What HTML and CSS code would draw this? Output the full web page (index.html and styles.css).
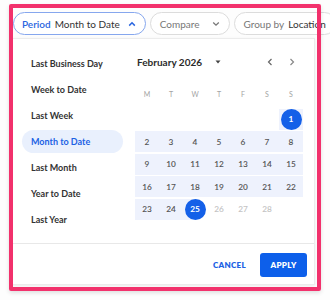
FILE: index.html
```html
<!DOCTYPE html>
<html lang="en">
<head>
    <meta charset="UTF-8">
    <meta name="viewport" content="width=device-width, initial-scale=1.0">
    <title>Period - Month to Date</title>
    <link rel="stylesheet" href="styles.css">
</head>
<body>
    <div class="page">
        <div class="filters">
            <div class="chip active">
                <span class="chip-label">Period</span>
                <span class="chip-value">Month to Date</span>
                <svg class="chevron" width="8" height="6" viewBox="0 0 8 6"><path d="M1.2 4.6 L4 1.8 L6.8 4.6" fill="none" stroke="#2a66e0" stroke-width="1.5"/></svg>
            </div>
            <div class="chip">
                <span class="chip-label grey">Compare</span>
                <svg class="chevron" width="8" height="6" viewBox="0 0 8 6"><path d="M1.2 1.6 L4 4.2 L6.8 1.6" fill="none" stroke="#777" stroke-width="1.3"/></svg>
            </div>
            <div class="chip">
                <span class="chip-label grey">Group by</span>
                <span class="chip-value">Location</span>
            </div>
        </div>

        <div class="popup">
            <div class="popup-body">
                <ul class="presets">
                    <li>Last Business Day</li>
                    <li>Week to Date</li>
                    <li>Last Week</li>
                    <li class="selected">Month to Date</li>
                    <li>Last Month</li>
                    <li>Year to Date</li>
                    <li>Last Year</li>
                </ul>

                <div class="calendar">
                    <div class="cal-head">
                        <span class="cal-title">February 2026</span>
                        <svg class="caret" width="6" height="4" viewBox="0 0 6 4"><path d="M0.5 0.5 H5.5 L3 3.5 Z" fill="#444"/></svg>
                        <span class="cal-spacer"></span>
                        <span class="cal-nav">
                            <svg width="6" height="8" viewBox="0 0 6 8"><path d="M4.5 1 L1.5 4 L4.5 7" fill="none" stroke="#666" stroke-width="1.2"/></svg>
                        </span>
                        <span class="cal-nav">
                            <svg width="6" height="8" viewBox="0 0 6 8"><path d="M1.5 1 L4.5 4 L1.5 7" fill="none" stroke="#888" stroke-width="1.2"/></svg>
                        </span>
                    </div>
                    <div class="weekdays">
                        <span>M</span><span>T</span><span>W</span><span>T</span><span>F</span><span>S</span><span>S</span>
                    </div>
                    <div class="days">
                        <span></span><span></span><span></span><span></span><span></span><span></span>
                        <span class="in-range"><b class="picked">1</b></span>
                        <span class="in-range">2</span><span class="in-range">3</span><span class="in-range">4</span><span class="in-range">5</span><span class="in-range">6</span><span class="in-range">7</span><span class="in-range">8</span>
                        <span class="in-range">9</span><span class="in-range">10</span><span class="in-range">11</span><span class="in-range">12</span><span class="in-range">13</span><span class="in-range">14</span><span class="in-range">15</span>
                        <span class="in-range">16</span><span class="in-range">17</span><span class="in-range">18</span><span class="in-range">19</span><span class="in-range">20</span><span class="in-range">21</span><span class="in-range">22</span>
                        <span class="in-range">23</span><span class="in-range">24</span>
                        <span class="range-end"><b class="picked">25</b></span>
                        <span class="disabled">26</span><span class="disabled">27</span><span class="disabled">28</span>
                        <span></span>
                    </div>
                </div>
            </div>

            <div class="popup-foot">
                <button class="btn-text">CANCEL</button>
                <button class="btn-primary">APPLY</button>
            </div>
        </div>
    </div>

    <!-- annotation frame drawn over the screenshot -->
    <div class="highlight"></div>
</body>
</html>
```

FILE: styles.css
```css
body {
    font-family: Lato, "Open Sans", sans-serif;
    margin: 0;
    padding: 0;
    background-color: #fdfdfd;
    width: 330px;
    height: 300px;
    overflow: hidden;
    position: relative;
}

.page {
    padding-top: 12px;
}

.filters {
    display: flex;
    gap: 4px;
    padding-left: 13px;
    white-space: nowrap;
}

.chip {
    flex-shrink: 0;
    display: flex;
    align-items: center;
    height: 21px;
    padding: 0 9px;
    border: 1px solid #dcdcdc;
    border-radius: 12px;
    background-color: #fff;
    font-size: 10px;
}

.chip.active {
    border-color: #86a7ee;
    padding: 0 9px 0 8px;
}

.chip-label {
    color: #2a66e0;
    font-weight: 600;
    margin-right: 4px;
}

.chip-label.grey {
    color: #777;
    font-weight: 400;
}

.chip-value {
    color: #333;
}

.chip .chevron {
    flex-shrink: 0;
    margin-left: 8px;
}

.popup {
    margin: 3px 0 0 11px;
    width: 302px;
    background-color: #fff;
    border: 1px solid #ececec;
    box-shadow: 0 1px 3px rgba(0, 0, 0, 0.08);
}

.popup-body {
    display: flex;
    gap: 12px;
    padding: 13px 0 12px 10px;
}

.presets {
    list-style: none;
    margin: 0;
    padding: 0;
    width: 101px;
    display: flex;
    flex-direction: column;
    gap: 3px;
}

.presets li {
    height: 23px;
    line-height: 23px;
    padding-left: 9px;
    border-radius: 12px;
    font-size: 9px;
    font-weight: 700;
    color: #333;
}

.presets li.selected {
    background-color: #e9f0fd;
    color: #1c62e4;
}

.calendar {
    width: 168px;
}

.cal-head {
    display: flex;
    align-items: center;
    height: 20px;
}

.cal-title {
    padding-left: 2px;
    font-size: 10px;
    font-weight: 700;
    color: #2b2b2b;
}

.caret {
    margin-left: 13px;
}

.cal-spacer {
    flex: 1;
}

.cal-nav {
    width: 22px;
    display: flex;
    justify-content: center;
}

.weekdays {
    display: grid;
    grid-template-columns: repeat(7, 24px);
    margin-top: 14px;
    height: 16px;
    line-height: 16px;
    text-align: center;
    font-size: 7px;
    color: #a3a3a3;
}

.days {
    display: grid;
    grid-template-columns: repeat(7, 24px);
    grid-auto-rows: 21px;
    row-gap: 1.5px;
    margin-top: 6.5px;
}

.days span {
    display: flex;
    align-items: center;
    justify-content: center;
    font-size: 8.3px;
    font-weight: 600;
    color: #555;
}

.days .in-range {
    background-color: #eef2fd;
}

.days .range-end {
    background: linear-gradient(to right, #eef2fd 50%, transparent 50%);
}

.days .disabled {
    color: #c4c4c4;
}

.picked {
    width: 21px;
    height: 21px;
    border-radius: 50%;
    background-color: #1460e8;
    color: #fff;
    display: flex;
    align-items: center;
    justify-content: center;
    font-weight: 700;
}

.popup-foot {
    display: flex;
    justify-content: flex-end;
    align-items: center;
    gap: 8px;
    border-top: 1px solid #e8e8e8;
    padding: 9px 7px 7px 0;
}

.popup-foot button {
    font-family: Lato, "Open Sans", sans-serif;
    font-size: 8px;
    font-weight: 800;
    letter-spacing: 0.3px;
    border: none;
    cursor: pointer;
}

.btn-text {
    background: none;
    color: #1c62e4;
    padding: 0 6px;
    height: 24px;
}

.btn-primary {
    background-color: #0d5fea;
    color: #fff;
    width: 47px;
    height: 24px;
    border-radius: 3px;
}

.highlight {
    position: absolute;
    left: 9px;
    top: 4px;
    width: 304px;
    height: 279px;
    border: 4px solid #f2316c;
    border-radius: 2px;
    box-shadow: 0 2px 4px rgba(0, 0, 0, 0.12);
}
```
